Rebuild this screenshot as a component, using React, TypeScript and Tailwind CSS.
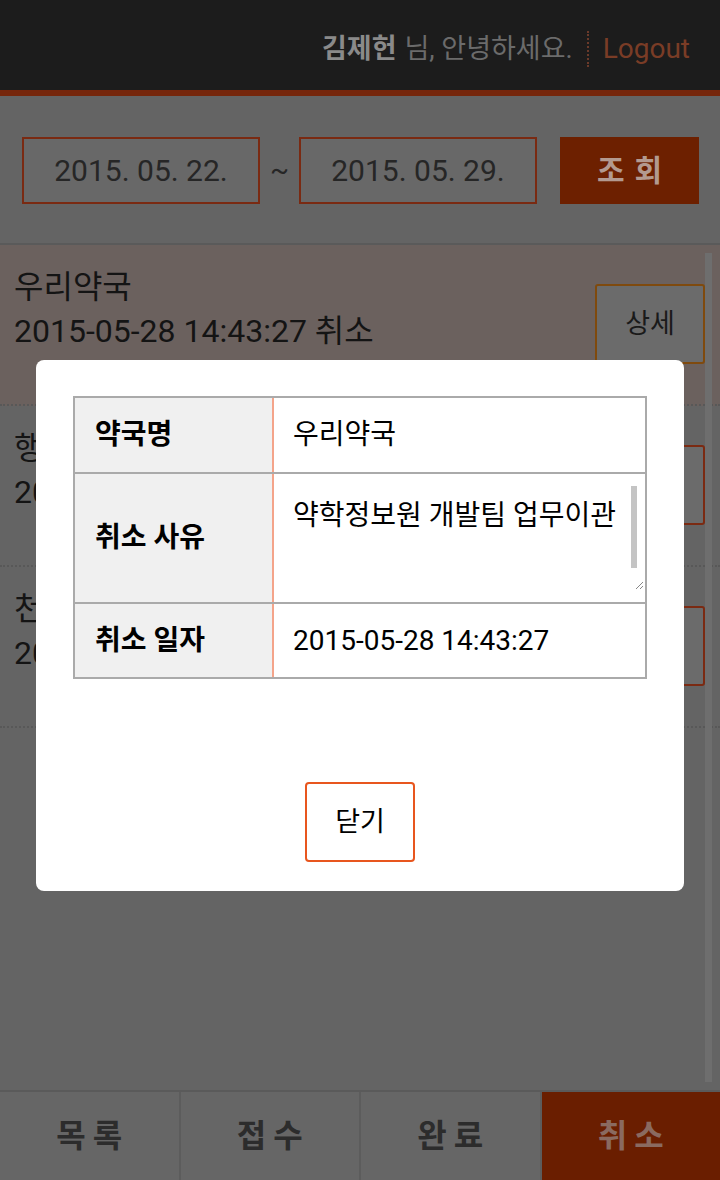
import React from "react";

const font = { fontFamily: "Roboto, 'Noto Sans CJK KR', sans-serif" };

function ListRow({ title, sub, selected, btnBorder }: { title: string; sub: string; selected?: boolean; btnBorder: string }) {
  return (
    <div className={`h-[161px] flex items-start justify-between pl-[14px] pr-[15px] border-b-2 border-dotted border-[#585858] ${selected ? "bg-[#6b615e]" : ""}`}>
      <div className="mt-[20px] flex flex-col text-[32px] leading-[44px] text-[#141414]">
        <span>{title}</span>
        <span>{sub}</span>
      </div>
      <div className={`mt-[39px] w-[110px] h-[80px] border-2 ${btnBorder} rounded-[3px] bg-[#6b6b6b] flex items-center justify-center text-[27px] text-[#1a1a1a]`}>
        상세
      </div>
    </div>
  );
}

export default function App() {
  return (
    <div className="relative w-[720px] h-[1180px] overflow-hidden flex flex-col bg-[#646464]" style={font}>
      {/* header */}
      <div className="h-[90px] bg-[#1c1c1c] flex items-center justify-end pr-[30px] pt-[8px]">
        <span className="text-[27px] text-[#8a8a8a] font-bold">김제헌</span>
        <span className="text-[27px] text-[#6b6b6b] ml-[8px]">님, 안녕하세요.</span>
        <span className="mx-[14px] h-[36px] border-l-2 border-dotted border-[#6a3a2a]" />
        <span className="text-[28px] text-[#7a3c26]">Logout</span>
      </div>
      <div className="h-[6px] bg-[#76260b]" />
      {/* search */}
      <div className="h-[149px] flex items-center pl-[22px] pt-[1px] border-b-2 border-[#5a5a5a]">
        <div className="w-[238px] h-[67px] border-2 border-[#7a2a12] bg-[#686868] flex items-center justify-center text-[30px] text-[#262626]">
          2015. 05. 22.
        </div>
        <div className="w-[39px] text-center text-[28px] text-[#262626]">~</div>
        <div className="w-[238px] h-[67px] border-2 border-[#7a2a12] bg-[#686868] flex items-center justify-center text-[30px] text-[#262626]">
          2015. 05. 29.
        </div>
        <div className="ml-[23px] w-[139px] h-[67px] bg-[#6d2000] flex items-center justify-center text-[30px] font-bold text-[#b39a90] tracking-[10px] pl-[10px]">
          조회
        </div>
      </div>
      {/* list */}
      <div className="flex-1 relative">
        <ListRow title="우리약국" sub="2015-05-28 14:43:27 취소" selected btnBorder="border-[#7f4a0e]" />
        <ListRow title="행복약국" sub="2015-05-28 14:43:27 취소" btnBorder="border-[#7b2a12]" />
        <ListRow title="천사약국" sub="2015-05-28 14:43:27 취소" btnBorder="border-[#7b2a12]" />
        <div className="absolute right-[8px] top-[8px] bottom-[8px] w-[7px] bg-[#6e6e6e]" />
      </div>
      {/* tabs */}
      <div className="h-[90px] flex border-t-2 border-[#5a5a5a]">
        {["목록", "접수", "완료"].map((t) => (
          <div key={t} className="flex-1 bg-[#666666] border-r-2 border-[#5c5c5c] flex items-center justify-center text-[32px] font-bold text-[#2c2c2c] tracking-[7px] pl-[7px]">
            {t}
          </div>
        ))}
        <div className="flex-1 bg-[#6a1e00] flex items-center justify-center text-[32px] font-bold text-[#8a6a60] tracking-[7px] pl-[7px]">
          취소
        </div>
      </div>

      {/* modal */}
      <div className="absolute inset-0 flex justify-center pt-[360px]">
        <div className="w-[648px] h-[531px] bg-white rounded-[8px] flex flex-col items-center pt-[36px]">
          <div className="w-[574px] border-2 border-[#aaaaaa] text-black">
            <div className="flex h-[76px] border-b-2 border-[#aaaaaa]">
              <div className="w-[199px] bg-[#f0f0f0] border-r-2 border-[#f4a48a] flex items-center pl-[20px] text-[28px] font-bold">약국명</div>
              <div className="flex-1 flex items-center pl-[19px] text-[28px]">우리약국</div>
            </div>
            <div className="flex h-[130px] border-b-2 border-[#aaaaaa]">
              <div className="w-[199px] bg-[#f0f0f0] border-r-2 border-[#f4a48a] flex items-center pl-[20px] text-[28px] font-bold">취소 사유</div>
              <div className="flex-1 relative pl-[19px] pt-[24px] text-[28px] leading-[36px]">
                약학정보원 개발팀 업무이관
                <div className="absolute right-[8px] top-[12px] w-[6px] h-[82px] bg-[#c4c4c4]" />
                <svg className="absolute right-[1px] bottom-[12px]" width="10" height="10" viewBox="0 0 10 10">
                  <path d="M9 2 L2 9 M9 6 L6 9" stroke="#888" strokeWidth="1" />
                </svg>
              </div>
            </div>
            <div className="flex h-[73px]">
              <div className="w-[199px] bg-[#f0f0f0] border-r-2 border-[#f4a48a] flex items-center pl-[20px] text-[28px] font-bold">취소 일자</div>
              <div className="flex-1 flex items-center pl-[19px] text-[28px]">2015-05-28 14:43:27</div>
            </div>
          </div>
          <div className="mt-[103px] w-[110px] h-[80px] border-2 border-[#e8561e] rounded-[4px] flex items-center justify-center text-[27px] text-black">
            닫기
          </div>
        </div>
      </div>
    </div>
  );
}
